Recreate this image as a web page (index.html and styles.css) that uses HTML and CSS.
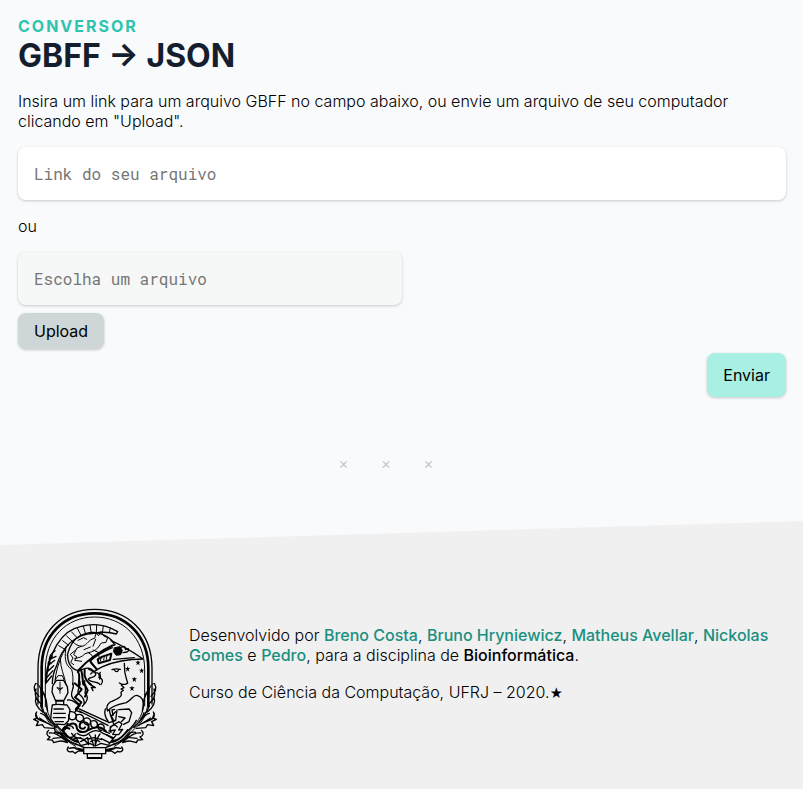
FILE: index.html
```html
<!DOCTYPE html>
<html lang="pt-BR">
<head>
<meta charset="utf-8">
<meta name="viewport" content="width=device-width, initial-scale=1">
<title>Conversor GBFF → JSON</title>
<link rel="stylesheet" href="styles.css">
</head>
<body>
<main class="page">
  <header>
    <p class="eyebrow">Conversor</p>
    <h1 class="title">GBFF → JSON</h1>
  </header>
  <p class="intro">Insira um link para um arquivo GBFF no campo abaixo, ou envie um arquivo de seu computador clicando em "Upload".</p>
  <form class="form">
    <input class="field" type="text" placeholder="Link do seu arquivo" aria-label="Link do seu arquivo">
    <p class="or">ou</p>
    <input class="field field-file" type="text" placeholder="Escolha um arquivo" aria-label="Escolha um arquivo" readonly>
    <button class="button button-upload" type="button">Upload</button>
    <button class="button button-send" type="submit">Enviar</button>
  </form>
  <div class="divider" aria-hidden="true"><span>×</span><span>×</span><span>×</span></div>
</main>
<footer class="footer">
  <svg class="emblem" viewBox="36 24 378 453" role="img" aria-label="Minerva, símbolo da UFRJ">
    <defs>
      <g id="wreath" class="ink">
        <path d="M46 250c16 2 17 20 17 35 4 48 12 76 42 100 20 20 35 40 62 54M60 262c22 22 17 47 21 66 7 32 29 50 44 70 12 18 27 28 47 35"/>
        <path class="bold" d="M46 252c-10 16 2 27 11 37M48 267c-7 24 5 34 17 47M48 291c-7 21 6 34 20 45M70 280c13 20 9 37 13 53M62 316c4 18 13 26 25 39"/>
        <path class="bold" d="M50 336c-8 13 2 24 17 27 11 4 20 7 29 14M47 340l5 14-11 4 14 7-6 12 18-3 6 9 27 2M58 354l25 16M62 340c12 1 21 16 31 27"/>
        <path class="bold" d="M86 391c-9 7-6 17 4 20l-8 8 15 1 4 8 14-4c12-3 17-1 27 4M88 399c18-3 33 11 52 25M103 397c19-4 28 12 44 27M99 415l29-3"/>
        <path class="bold" d="M101 361c8 18 24 29 35 42 11 12 23 22 39 24M78 338c5 20 18 33 31 45M127 389c11 14 22 31 47 34M119 397c7 19 22 26 44 35"/>
        <path class="bold" d="M145 441c-8 11 1 17 12 13l8 6 10-7h23M148 445c18-6 26 4 42 3M162 442c8 11 18 4 29 10M165 432c14 2 22 11 35 12"/>
      </g>
      <path id="star" d="M0-8l2 5 6 0-5 4 2 7-5-4-5 4 2-7-5-4 6 0z"/>
    </defs>
    <g class="ink">
      <path class="bold" d="M54 312V205C54 96 125 28 224 28s172 68 172 177v107"/>
      <path class="ring" d="M65 318V205C65 104 133 40 224 40s161 64 161 165v113"/>
      <path d="M76 320V210C76 114 139 51 224 51s150 63 150 159v108"/>
    </g>
    <use href="#wreath"/>
    <use href="#wreath" transform="translate(450 0) scale(-1 1)"/>
    <g class="ink">
      <path class="bold" d="M78 249C84 157 125 91 181 80c43-13 81-4 112 15l-4 7c-24-7-44-7-68-2-56 1-96 43-111 97-12 24-13 47-13 54"/>
      <path d="M271 84l-3 14M250 78l-3 20M230 75l-1 23M210 76l4 24M190 79l7 24M172 85l12 22M155 96l17 18M140 108l18 17M128 122l18 14M116 137l21 12"/>
      <path class="bold" d="M105 152c-12 11-16 14-17 27l20-10M97 168c-10 12-14 18-13 29l20-16M90 187c-8 12-10 20-9 29l20-19M84 207c-5 10-7 18-5 27l20-22M80 228c-4 9-5 15-2 21l17-21"/>
      <path d="M104 252c2-34 12-65 24-91l14-24M121 176c0 30 12 49 17 77M138 140c-4 28-5 55 17 68 4 15 5 31 3 46"/>
      <path class="bold" d="M142 166c8-36 28-59 57-66 27-7 58 2 75 20l10 14M143 166c0 27 14 43 30 45 28-30 63-57 104-76"/>
      <path d="M157 125c9 8 17 13 29 14 17-4 18-20 38-24l4-15 8 7 7-13 8 14 12 5-5 14-14 2-11 15c-9 11-25 13-38 17-8 10-22 14-31 14M184 139l-13 5-10 20 10 7-7 10 21 3M174 121l17-8 9 5M166 151l-15 12 8 11-7 13 9 7M204 157l12 9 3 10M219 150l16 7 2 14M227 118l-8 21M192 149l19-8"/>
      <path class="bold" d="M273 122c35 15 67 35 96 55-44 0-81 5-121 23-11 5-20 11-26 15-11-16-25-13-50 1 32-37 66-62 113-82M213 190l18 17M211 183c20-19 43-30 66-40"/>
      <path class="rim" d="M211 184l18 23M233 178l14-8 27-9-4 19-34 10z"/>
      <path d="M241 183l3-11m7 8l2-11m6 9l2-12"/>
      <path class="solid" d="M284 143l16-3 7 11-5 13-13 2-8-10z"/>
      <path class="bold" d="M302 142l11-3 4 10 8-3M309 158l12-2 6-5M280 178l63-5"/>
      <path class="rim" d="M174 216c8 10 1 25 3 39M184 213c5 14 3 26 6 41M194 210c-3 22 5 35 19 44"/>
      <path class="bold" d="M205 207c11 8 21 5 22 14 2 14-17 8-22 16 4 12 27 5 34 16M222 218c13-2 18 5 15 15 11 2 14 12 6 21M213 209c5 4 5 10-1 13M241 217c-6 5 6 11-2 20"/>
      <path class="bold" d="M276 209c8-3 16-3 25-1M283 210c4 6 10 7 12 1M313 190c-1 22 1 32 7 49l3 10c-4 5-9 5-16 4l-9-4M304 255l8 8-9 4 7 4-7 6 1 9c-5 11-23 14-33 20-12 9-13 17-8 27 13-17 42-22 56-25 18-9 22-27 34-21 15 5 16 15 18 28"/>
      <path class="bold" d="M256 327c-4 11 0 27 8 36M269 330c-2 14 8 24 14 33"/>
      <path class="bold" d="M158 249c8 14-7 24-3 39 4 15 18 14 24 29M179 243c7 15-10 24-4 37 12 10 23 21 16 34M194 242c-2 16 6 22 1 38 13 11 6 26-8 39M207 251l19 12-12-1 5 10M143 300c15-4 23 10 37 17l-13 14 18 7"/>
      <path class="rim" d="M164 250l21 18-20 24 19 15-17 21M190 246l13 25-8 19"/>
    </g>
    <g class="solid">
      <use href="#star" x="354" y="188"/><use href="#star" x="323" y="207"/><use href="#star" x="365" y="212"/><use href="#star" x="343" y="238"/><use href="#star" x="336" y="265"/>
    </g>
    <g class="ink">
      <path class="bold paper" d="M109 241l-11 17-2 18 11 27h24l13-25-2-18-11-19zM108 301h23v13h-23z"/>
      <path d="M120 246v34M112 263l8 3 8-3-8 8zM106 239l8-12h13l5 12"/>
      <path class="bold paper" d="M97 315c9-3 20-3 44 0l9 14-5 34-12 11-30-2-11-15 3-29z"/>
      <path class="bold" d="M102 327h28M101 340h35M100 353h36M105 365h25M104 378v12c3 10 13 12 26 11l4-21"/>
      <path class="bold" d="M174 325l94 43M178 333l86 43M174 325l-10 12M268 368l19-7 4-31M284 328l-8 2 3 17M296 329l31-2 8 11-8 27-16 8"/>
      <path class="bold" d="M151 335c16-2 22 12 14 22-12 6-21-1-19-12M168 347c14-9 26 0 21 14-12 9-24-1-20-12M191 357c13-8 25 1 19 15-12 6-21-2-18-12M213 364c14-6 24 4 17 17-10 6-20-1-17-12M235 374c11-5 20 1 17 13-8 8-21 2-17-10"/>
      <path class="rim" d="M148 374c14-8 22-2 23 12 9 17 35 11 35-6-1-17-25-18-27-4-1 10 12 14 16 6M206 390c20-14 41-9 52 4M148 386c-18-11-26 11-10 17M143 371l-8 17"/>
      <path class="bold" d="M128 387c9-13 28-13 32-2M133 402c6 14 28 14 33 0M155 400c7 12 18 15 27 13M158 418c20-9 34-3 45 13M171 400c10 9 26 10 36 0M202 403c16-13 34-15 49-2l28 12M182 425l21-12 3 21M169 414l12 21"/>
      <path class="bold" d="M208 404c8 9 9 21 13 34M240 402c-9 10-9 22-15 34M212 425c10-7 19-7 27 0M226 405v32M205 417l17-4 23 6"/>
      <path class="bold" d="M270 381l27-16 9 7-10 18 12-2-12 16-18-1 8-13-19 3M273 397c-9-15 11-30 19-16M281 372l-8-23 14-14M296 350l19 4-11 11M251 393l18 7M259 404l19 12M244 416l24 12M290 403l-23 29"/>
      <path class="paper bold" d="M191 443h66v18h-12v14h-43v-14h-11z"/>
      <path class="bold" d="M201 461h45M206 473h37M181 437l28-7 17 8 17-8 28 7"/>
    </g>
  </svg>
  <div class="credits">
    <p>Desenvolvido por <a href="#breno">Breno Costa</a>, <a href="#bruno">Bruno Hryniewicz</a>, <a href="#matheus">Matheus Avellar</a>, <a href="#nickolas">Nickolas Gomes</a> e <a href="#pedro">Pedro</a>, para a disciplina de <strong>Bioinformática</strong>.</p>
    <p>Curso de Ciência da Computação, UFRJ – 2020.<span class="star">★</span></p>
  </div>
</footer>
</body>
</html>
```
FILE: styles.css
```css
* { box-sizing: border-box; }

body {
  margin: 0;
  min-height: 100vh;
  display: flex;
  flex-direction: column;
  background: #f9fafc;
  color: #000;
  font: 300 16px/20px Inter, "Liberation Sans", sans-serif;
}

p { margin: 0; }

.page { padding: 16px 17px 0 18px; }

.eyebrow {
  color: #2ec4b0;
  font-weight: 700;
  letter-spacing: 2px;
  text-transform: uppercase;
}

.title {
  margin: 0 0 15px;
  color: #151e2e;
  font-size: 32px;
  font-weight: 700;
  line-height: 40px;
}

.form {
  display: flex;
  flex-direction: column;
  align-items: flex-start;
}

.field {
  width: 100%;
  height: 53px;
  margin-top: 16px;
  padding: 0 16px;
  border: 0;
  border-radius: 8px;
  background: #fff;
  box-shadow: 0 1px 3px rgba(0, 0, 0, .2);
  font: 400 16px "Roboto Mono", "Liberation Mono", monospace;
}

.field::placeholder { color: #757575; opacity: 1; }

.field-file {
  width: 50%;
  background: #f6f8f7;
}

.or { margin-top: 16px; }

.button {
  border: 0;
  border-radius: 8px;
  padding: 8px 16px;
  color: #000;
  font: 400 16px/20px Inter, "Liberation Sans", sans-serif;
  box-shadow: 0 1px 3px rgba(0, 0, 0, .2);
}

.button-upload {
  margin-top: 8px;
  background: #ced6d7;
}

.button-send {
  align-self: flex-end;
  margin-top: 4px;
  padding: 12px 16px;
  background: #a8f0e4;
}

.divider {
  display: flex;
  justify-content: center;
  gap: 32px;
  margin-top: 56px;
  padding-right: 32px;
  color: #b8c2c2;
}

.footer {
  flex: 1;
  display: flex;
  align-items: flex-start;
  gap: 31px;
  margin-top: 48px;
  padding: 87px 18px 30px 32px;
  background: #f0f0f0;
  clip-path: polygon(0 24px, 100% 0, 100% 100%, 0 100%);
}

.emblem {
  flex: none;
  width: 126px;
  height: 151px;
}

.credits {
  display: grid;
  gap: 17px;
  padding-top: 17px;
}

.credits a {
  color: #1a8f80;
  font-weight: 500;
  text-decoration: none;
}

.credits strong { font-weight: 500; }

.star {
  font-size: 13px;
  line-height: 1;
}

.ink {
  fill: none;
  stroke: #000;
  stroke-width: 3px;
  stroke-linecap: round;
  stroke-linejoin: round;
}

.bold { stroke-width: 4px; }
.rim { stroke-width: 6px; }
.ring { stroke-width: 8px; }
.solid { fill: #000; }
.paper { fill: #f0f0f0; }
```
